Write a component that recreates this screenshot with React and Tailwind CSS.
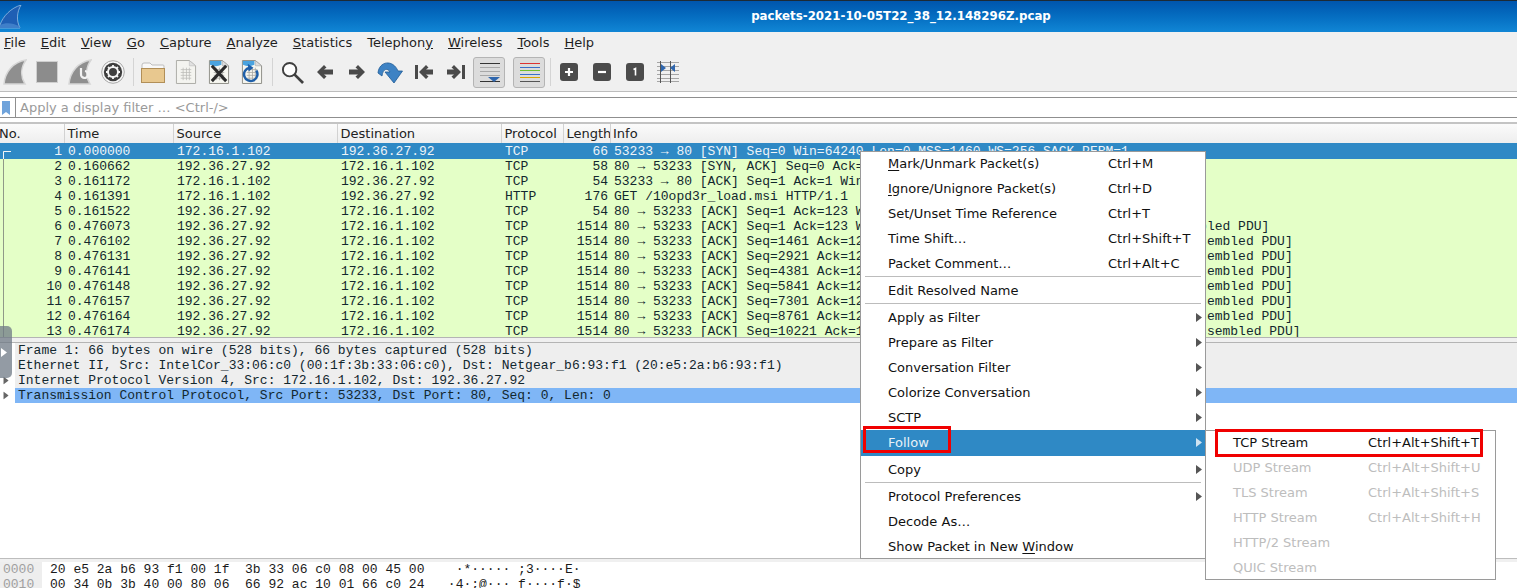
import { Fragment } from 'react';

const UI = "font-['DejaVu_Sans',sans-serif]";
const MONO = "font-['Liberation_Mono',monospace]";

const seg = 'Win=64240 Len=1460 [TCP segment of a reassembled PDU]';
const packets = [
    ['1', '0.000000', '172.16.1.102', '192.36.27.92', 'TCP', '66', '53233 → 80 [SYN] Seq=0 Win=64240 Len=0 MSS=1460 WS=256 SACK_PERM=1'],
    ['2', '0.160662', '192.36.27.92', '172.16.1.102', 'TCP', '58', '80 → 53233 [SYN, ACK] Seq=0 Ack=1 Win=64240 Len=0 MSS=1460'],
    ['3', '0.161172', '172.16.1.102', '192.36.27.92', 'TCP', '54', '53233 → 80 [ACK] Seq=1 Ack=1 Win=64240 Len=0'],
    ['4', '0.161391', '172.16.1.102', '192.36.27.92', 'HTTP', '176', 'GET /10opd3r_load.msi HTTP/1.1'],
    ['5', '0.161522', '192.36.27.92', '172.16.1.102', 'TCP', '54', '80 → 53233 [ACK] Seq=1 Ack=123 Win=64240 Len=0'],
    ['6', '0.476073', '192.36.27.92', '172.16.1.102', 'TCP', '1514', `80 → 53233 [ACK] Seq=1 Ack=123 ${seg}`],
    ['7', '0.476102', '192.36.27.92', '172.16.1.102', 'TCP', '1514', `80 → 53233 [ACK] Seq=1461 Ack=123 ${seg}`],
    ['8', '0.476131', '192.36.27.92', '172.16.1.102', 'TCP', '1514', `80 → 53233 [ACK] Seq=2921 Ack=123 ${seg}`],
    ['9', '0.476141', '192.36.27.92', '172.16.1.102', 'TCP', '1514', `80 → 53233 [ACK] Seq=4381 Ack=123 ${seg}`],
    ['10', '0.476148', '192.36.27.92', '172.16.1.102', 'TCP', '1514', `80 → 53233 [ACK] Seq=5841 Ack=123 ${seg}`],
    ['11', '0.476157', '192.36.27.92', '172.16.1.102', 'TCP', '1514', `80 → 53233 [ACK] Seq=7301 Ack=123 ${seg}`],
    ['12', '0.476164', '192.36.27.92', '172.16.1.102', 'TCP', '1514', `80 → 53233 [ACK] Seq=8761 Ack=123 ${seg}`],
    ['13', '0.476174', '192.36.27.92', '172.16.1.102', 'TCP', '1514', `80 → 53233 [ACK] Seq=10221 Ack=123 ${seg}`],
];

const details = [
    'Frame 1: 66 bytes on wire (528 bits), 66 bytes captured (528 bits)',
    'Ethernet II, Src: IntelCor_33:06:c0 (00:1f:3b:33:06:c0), Dst: Netgear_b6:93:f1 (20:e5:2a:b6:93:f1)',
    'Internet Protocol Version 4, Src: 172.16.1.102, Dst: 192.36.27.92',
    'Transmission Control Protocol, Src Port: 53233, Dst Port: 80, Seq: 0, Len: 0',
];

const mainMenu = [
    ['F', 'ile', ''], ['E', 'dit', ''], ['V', 'iew', ''], ['G', 'o', ''], ['C', 'apture', ''], ['A', 'nalyze', ''],
    ['S', 'tatistics', ''], ['Telephon', 'y', 'tail'], ['W', 'ireless', ''], ['T', 'ools', ''], ['H', 'elp', ''],
];

const contextMenu = [
    { pre: '', u: 'M', post: 'ark/Unmark Packet(s)', keys: 'Ctrl+M' },
    { pre: '', u: 'I', post: 'gnore/Unignore Packet(s)', keys: 'Ctrl+D' },
    { pre: 'Set/Unset Time Reference', keys: 'Ctrl+T' },
    { pre: 'Time Shift…', keys: 'Ctrl+Shift+T' },
    { pre: 'Packet Comment…', keys: 'Ctrl+Alt+C', sep: true },
    { pre: 'Edit Resolved Name', sep: true },
    { pre: 'Apply as Filter', sub: true },
    { pre: 'Prepare as Filter', sub: true },
    { pre: 'Conversation Filter', sub: true },
    { pre: 'Colorize Conversation', sub: true },
    { pre: 'SCTP', sub: true },
    { pre: 'Follow', sub: true, active: true },
    { pre: 'Copy', sub: true, sep: true },
    { pre: 'Protocol Preferences', sub: true },
    { pre: 'Decode As…' },
    { pre: 'Show Packet in New ', u: 'W', post: 'indow' },
];

const streams = [
    ['TCP Stream', 'Ctrl+Alt+Shift+T', true],
    ['UDP Stream', 'Ctrl+Alt+Shift+U'],
    ['TLS Stream', 'Ctrl+Alt+Shift+S'],
    ['HTTP Stream', 'Ctrl+Alt+Shift+H'],
    ['HTTP/2 Stream', ''],
    ['QUIC Stream', ''],
];

const Sep = ({ className }) => <div className={`w-px h-[28px] bg-[#d4d4d4] ${className}`} />;

const Fin = ({ className, restart }) => (
    <svg viewBox="0 0 24 26" className={`w-[24px] h-[26px] ${className}`}>
        <path d="M1 25 C2 13 10 3 23 1 C18 8 17 17 22 25 Z" fill="#8f8f8f" stroke="#d6d6d6" strokeWidth="1.5" />
        {restart && <path d="M13 9 v6 a3.5 3.5 0 1 0 4 -3" fill="none" stroke="#f2f2f2" strokeWidth="2.2" />}
    </svg>
);

const SheetBase = ({ children }) => (
    <>
        <path d="M1.5 1.5 H15 L21.5 7 V25.5 H1.5 Z" fill="#f6f6f0" stroke="#8d8d85" />
        <path d="M15 1.5 V7 H21.5 Z" fill="#dcdcdc" stroke="#a0a0a0" strokeWidth="0.6" />
        <path d="M6 11 H17 M6 14 H17 M6 17 H17 M6 20 H17 M8.5 9 V22 M12 9 V22 M15 9 V22" stroke="#a5a5a0" strokeWidth="0.8" />
        {children}
    </>
);

const Arrow = ({ className, flip }) => (
    <svg viewBox="0 0 16 14" className={`w-[16px] h-[14px] ${className}`}>
        <path d={flip ? 'M9 0 L16 7 L9 14 L6.5 11.5 L9 9.5 H0 V4.5 H9 L6.5 2.5 Z' : 'M7 0 L0 7 L7 14 L9.5 11.5 L7 9.5 H16 V4.5 H7 L9.5 2.5 Z'} fill="#4a4a4a" />
    </svg>
);

const Zoom = ({ className, children }) => (
    <svg viewBox="0 0 18 18" className={`w-[18px] h-[18px] ${className}`}>
        <rect x="0" y="0" width="18" height="18" rx="3" fill="#4b4b4b" />
        {children}
    </svg>
);

const Toolbar = () => (
    <div className="flex items-center h-[39px] bg-[#f0f0f0] border-b border-[#bdbdbd]">
        <Fin className="ml-[3px]" />
        <svg viewBox="0 0 22 22" className="w-[22px] h-[22px] ml-[9px]">
            <rect x="0.5" y="0.5" width="21" height="21" fill="#8c8c8c" stroke="#cfcfcf" />
        </svg>
        <Fin restart className="ml-[10px]" />
        <svg viewBox="0 0 24 24" className="w-[24px] h-[24px] ml-[9px]">
            <circle cx="12" cy="12" r="11.3" fill="#f7f7f7" stroke="#a8a8a8" />
            <circle cx="12" cy="12" r="9.2" fill="#3e3e3e" />
            <circle cx="12" cy="12" r="5" fill="none" stroke="#f4f4f4" strokeWidth="2" />
            <path d="M12 5 V7.5 M12 16.5 V19 M5 12 H7.5 M16.5 12 H19 M7 7 L8.7 8.7 M15.3 15.3 L17 17 M17 7 L15.3 8.7 M8.7 15.3 L7 17" stroke="#f4f4f4" strokeWidth="1.8" />
        </svg>
        <Sep className="ml-[8px]" />
        <svg viewBox="0 0 24 23" className="w-[24px] h-[23px] ml-[7px]">
            <path d="M1 4 Q1 2 3 2 H9 L11 4 H22 Q23 4 23 5 V8 H1 Z" fill="#f8f8f8" stroke="#bdbdbd" />
            <rect x="0.5" y="7.5" width="23" height="14" fill="#e8c88f" stroke="#b18f58" />
        </svg>
        <svg viewBox="0 0 23 27" className="w-[22px] h-[26px] ml-[10px] opacity-70"><SheetBase /></svg>
        <svg viewBox="0 0 23 27" className="w-[22px] h-[26px] ml-[11px]">
            <SheetBase>
                <path d="M2 2 H14 V6 Q8 9 2 6 Z" fill="#4aa3df" />
                <path d="M4 7 L19 23 M19 7 L4 23" stroke="#2b2b2b" strokeWidth="3.2" />
            </SheetBase>
        </svg>
        <svg viewBox="0 0 23 27" className="w-[22px] h-[26px] ml-[11px]">
            <SheetBase>
                <path d="M2 2 H14 V6 Q8 9 2 6 Z" fill="#4aa3df" />
                <path d="M9 9 A7 7 0 1 0 16 12" fill="none" stroke="#1f5fa8" strokeWidth="2.6" />
                <path d="M7 5 L13 9 L8 13 Z" fill="#1f5fa8" />
            </SheetBase>
        </svg>
        <Sep className="ml-[9px]" />
        <svg viewBox="0 0 24 24" className="w-[23px] h-[23px] ml-[8px]">
            <circle cx="9" cy="9" r="7" fill="#fdfdfd" stroke="#3f3f3f" strokeWidth="2" />
            <path d="M14 14 L23 23" stroke="#3f3f3f" strokeWidth="2.8" />
        </svg>
        <Arrow className="ml-[13px]" />
        <Arrow flip className="ml-[16px]" />
        <svg viewBox="0 0 26 24" className="w-[26px] h-[24px] ml-[12px]">
            <path d="M1 13 C2 1 16 -1 21 11 L25.5 11 L17 23 L8 12 L13 12 C11 8 6 8 5 16 Z" fill="#3d82c4" stroke="#1e5a96" strokeWidth="0.8" />
        </svg>
        <svg viewBox="0 0 18 14" className="w-[18px] h-[14px] ml-[12px]">
            <rect x="0" y="0" width="3" height="14" fill="#4a4a4a" />
            <path d="M11 0 L4 7 L11 14 L13.5 11.5 L11 9.5 H18 V4.5 H11 L13.5 2.5 Z" fill="#4a4a4a" />
        </svg>
        <svg viewBox="0 0 18 14" className="w-[18px] h-[14px] ml-[14px]">
            <rect x="15" y="0" width="3" height="14" fill="#4a4a4a" />
            <path d="M7 0 L14 7 L7 14 L4.5 11.5 L7 9.5 H0 V4.5 H7 L4.5 2.5 Z" fill="#4a4a4a" />
        </svg>
        <div className="w-[32px] h-[31px] ml-[8px] rounded-[3px] bg-[#dcdcdc] border border-[#b4b4b4] flex items-center justify-center">
            <svg viewBox="0 0 24 24" className="w-[24px] h-[24px]">
                <path d="M3 3.5 H23" stroke="#333" />
                <path d="M3 7.5 H23 M3 11.5 H23 M3 15.5 H23" stroke="#a8a8a8" />
                <path d="M3 21.5 H23" stroke="#333" />
                <path d="M11 17 H23 L17 22 Z" fill="#2f66ad" />
            </svg>
        </div>
        <div className="w-[32px] h-[31px] ml-[8px] rounded-[3px] bg-[#dcdcdc] border border-[#b4b4b4] flex items-center justify-center">
            <svg viewBox="0 0 24 24" className="w-[24px] h-[24px]">
                <path d="M3 3.5 H23" stroke="#d33" />
                <path d="M3 7.5 H23" stroke="#3b6fc9" />
                <path d="M3 10.5 H23" stroke="#6fbf2e" />
                <path d="M3 14.5 H23" stroke="#3b6fc9" />
                <path d="M3 17.5 H23" stroke="#d9a400" />
                <path d="M3 21.5 H23" stroke="#555" />
            </svg>
        </div>
        <Sep className="ml-[5px]" />
        <Zoom className="ml-[9px]">
            <path d="M9 5 V13 M5 9 H13" stroke="#fff" strokeWidth="2.2" />
        </Zoom>
        <Zoom className="ml-[15px]">
            <path d="M5 9 H13" stroke="#fff" strokeWidth="2.2" />
        </Zoom>
        <Zoom className="ml-[15px]">
            <path d="M7.5 6.5 L9.5 5.5 V12.5" fill="none" stroke="#fff" strokeWidth="1.6" />
        </Zoom>
        <svg viewBox="0 0 22 22" className="w-[22px] h-[22px] ml-[13px]">
            <path d="M0 1.5 H22 M0 5.5 H22 M0 9.5 H22 M0 13.5 H22 M0 17.5 H22 M0 20.5 H22" stroke="#a5a5a5" />
            <path d="M3.5 0 V22 M13.5 0 V22" stroke="#555" />
            <path d="M4 3 L9 7 L4 11 Z M18 3 L13 7 L18 11 Z" fill="#2f66ad" />
        </svg>
    </div>
);

const HeaderCell = ({ w, children }) => (
    <div className={`${w} shrink-0 h-full pl-[2.5px] flex items-center border-r border-[#d2d2d2] whitespace-nowrap overflow-hidden`}>
        {children}
    </div>
);

const PacketRow = ({ p, selected }) => (
    <div className={`flex leading-[15px] whitespace-pre ${selected ? 'bg-[#2f89c5] text-[#eef4f8] h-[16px] pt-px' : 'bg-[#e4ffc7] text-[#12272e] h-[15px]'}`}>
        <div className="w-[65px] shrink-0 text-right pr-[3px]">{p[0]}</div>
        <div className="w-[3px] shrink-0" />
        <div className="w-[109px] shrink-0">{p[1]}</div>
        <div className="w-[164px] shrink-0">{p[2]}</div>
        <div className="w-[164px] shrink-0">{p[3]}</div>
        <div className="w-[60px] shrink-0">{p[4]}</div>
        <div className="w-[43px] shrink-0 text-right">{p[5]}</div>
        <div className="w-[6px] shrink-0" />
        <div>{p[6]}</div>
    </div>
);

const Triangle = ({ className }) => (
    <svg viewBox="0 0 6 9" className={`w-[6px] h-[9px] ${className}`}>
        <path d="M0 0 L6 4.5 L0 9 Z" fill="currentColor" />
    </svg>
);

const ContextMenu = () => (
    <div className={`absolute left-[860px] top-[151px] w-[346px] h-[408px] bg-white border border-[#9a9a9a] text-[13px] text-[#111] ${UI}`}>
        <div className="-mt-px">
            {contextMenu.map((item) => (
                <Fragment key={item.pre + (item.post || '')}>
                    <div className={`relative flex items-center pl-[27px] whitespace-pre ${item.active ? 'bg-[#2f89c5] text-[#e8f1f7] h-[26px] pb-px mb-px' : 'h-[25px]'}`}>
                        <span>{item.pre}{item.u && <u className="underline-offset-2">{item.u}</u>}{item.post}</span>
                        {item.keys && <span className="absolute left-[247px]">{item.keys}</span>}
                        {item.sub && <Triangle className={`absolute left-[335px] top-[8px] ${item.active ? 'text-[#cfe3f1]' : 'text-[#555]'}`} />}
                    </div>
                    {item.sep && <div className="h-[2px] mx-[4px] border-t border-[#bcbcbc]" />}
                </Fragment>
            ))}
        </div>
    </div>
);

const SubMenu = () => (
    <div className={`absolute left-[1205px] top-[430px] w-[291px] h-[150px] bg-white border border-[#9a9a9a] text-[13px] ${UI}`}>
        <div className="-mt-px">
            {streams.map(([name, keys, on]) => (
                <div key={name} className={`relative h-[25px] flex items-center pl-[27px] whitespace-pre ${on ? 'text-[#111]' : 'text-[#bdbdbd]'}`}>
                    {name}
                    {keys && <span className="absolute left-[162px]">{keys}</span>}
                </div>
            ))}
        </div>
    </div>
);

export default function App() {
    return (
        <div className={`relative w-[1517px] h-[588px] overflow-hidden bg-white ${UI} text-[13px] text-[#222]`}>
            {/* title bar */}
            <div className="relative h-[32px] border-t border-[#1c2a36] bg-gradient-to-b from-[#0055ad] to-[#1186d5] flex items-center justify-center">
                <svg viewBox="0 0 22 24" className="absolute left-0 top-[4px] w-[22px] h-[24px]">
                    <path d="M0 20 C3 11 11 3 21 0 C17 7 16 15 20 23 L0 23 Z" fill="#1f5fb4" stroke="#a9c8e8" strokeWidth="0.7" />
                    <path d="M0 20 C6 17 13 18 19 21 L20 23 L0 23 Z" fill="#3f7fc9" />
                </svg>
                <span className="text-[11.8px] font-bold text-white pl-[285px]">packets-2021-10-05T22_38_12.148296Z.pcap</span>
            </div>

            {/* menu bar */}
            <div className="h-[21px] bg-[#f0f0f0] flex items-center pl-[4px] gap-[15px] text-[#1f1f1f]">
                {mainMenu.map(([a, b, tail]) => (
                    <span key={a + b} className="whitespace-pre">
                        {tail ? <>{a}<u>{b}</u></> : <><u>{a}</u>{b}</>}
                    </span>
                ))}
            </div>

            <Toolbar />

            {/* display filter */}
            <div className="pt-[5px] pb-[4px] bg-white">
                <div className="flex items-center h-[21px] border-y border-[#8f8f8f] text-[#9a9a9a]">
                    <div className="w-[16px] h-full shrink-0 flex items-center justify-center border-r border-[#8f8f8f]">
                        <svg viewBox="0 0 8 14" className="w-[8px] h-[14px] -ml-[3px]">
                            <path d="M0 0 H8 V14 L4 11 L0 14 Z" fill="#6fa3db" />
                        </svg>
                    </div>
                    <span className="pl-[4px]">Apply a display filter … &lt;Ctrl-/&gt;</span>
                </div>
            </div>

            {/* packet list */}
            <div className="border-t-[2px] border-[#c4c4c4] h-[21px] bg-gradient-to-b from-[#fbfbfb] to-[#eeeeee] flex text-[#222]">
                <div className="w-[65px] shrink-0 h-full flex items-center border-r border-[#d2d2d2] overflow-hidden">
                    <span className="-ml-[1px]">No.</span>
                </div>
                <HeaderCell w="w-[109px]">Time</HeaderCell>
                <HeaderCell w="w-[164px]">Source</HeaderCell>
                <HeaderCell w="w-[164px]">Destination</HeaderCell>
                <HeaderCell w="w-[62px]">Protocol</HeaderCell>
                <HeaderCell w="w-[47px]">Length</HeaderCell>
                <div className="pl-[2px] flex items-center">Info</div>
            </div>
            <div className={`relative h-[194px] overflow-hidden text-[13px] ${MONO}`}>
                {packets.map((p, i) => <PacketRow key={p[0]} p={p} selected={i === 0} />)}
                <svg viewBox="0 0 12 194" className="absolute left-0 top-0 w-[12px] h-[194px]">
                    <path d="M11 8.5 H3.5 V194" fill="none" stroke="#8f9a88" />
                    <path d="M11 8.5 H3.5 V16" fill="none" stroke="#f2f6f9" />
                </svg>
            </div>

            {/* packet details */}
            <div className="h-[6px] border-y border-[#b4b4b4] bg-[#f0f0f0]" />
            <div className={`h-[215px] bg-white text-[13px] text-[#12272e] ${MONO}`}>
                {details.map((line, i) => (
                    <div key={line} className="flex h-[15px] leading-[15px] whitespace-pre">
                        <div className="w-[15px] shrink-0 flex items-center pl-[3px]">
                            {i > 1 && <Triangle className="text-[#666] scale-90" />}
                        </div>
                        <div className={`flex-1 pl-[3px] ${i === 3 ? 'bg-[#7fb6f6]' : 'bg-[#eeeeee]'}`}>{line}</div>
                    </div>
                ))}
            </div>

            {/* packet bytes */}
            <div className="h-[4px] border-t border-[#bdbdbd] bg-[#f0f0f0]" />
            <div className={`text-[13px] text-[#1a1a1a] ${MONO}`}>
                <div className="flex h-[15px] leading-[15px] whitespace-pre">
                    <div className="w-[42px] shrink-0 pl-[3px] bg-[#eeeeee] text-[#a0a0a0]">0000</div>
                    <div className="pl-[8px]">20 e5 2a b6 93 f1 00 1f  3b 33 06 c0 08 00 45 00    ·*····· ;3····E·</div>
                </div>
                <div className="flex h-[15px] leading-[15px] whitespace-pre">
                    <div className="w-[42px] shrink-0 pl-[3px] bg-[#eeeeee] text-[#a0a0a0]">0010</div>
                    <div className="pl-[8px]">00 34 0b 3b 40 00 80 06  66 92 ac 10 01 66 c0 24   ·4·;@··· f····f·$</div>
                </div>
            </div>

            {/* pane handle */}
            <div className="absolute left-0 top-[326px] w-[12px] h-[52px] rounded-r-[5px] bg-[#6f7a86]/75 flex items-center">
                <Triangle className="text-white ml-[1px]" />
            </div>

            <ContextMenu />
            <SubMenu />

            {/* red callouts */}
            <div className="absolute left-[863px] top-[426px] w-[88px] h-[27px] border-[3px] border-[#f00000]" />
            <div className="absolute left-[1215px] top-[429px] w-[268px] h-[28px] border-[3px] border-[#f00000]" />
        </div>
    );
}
